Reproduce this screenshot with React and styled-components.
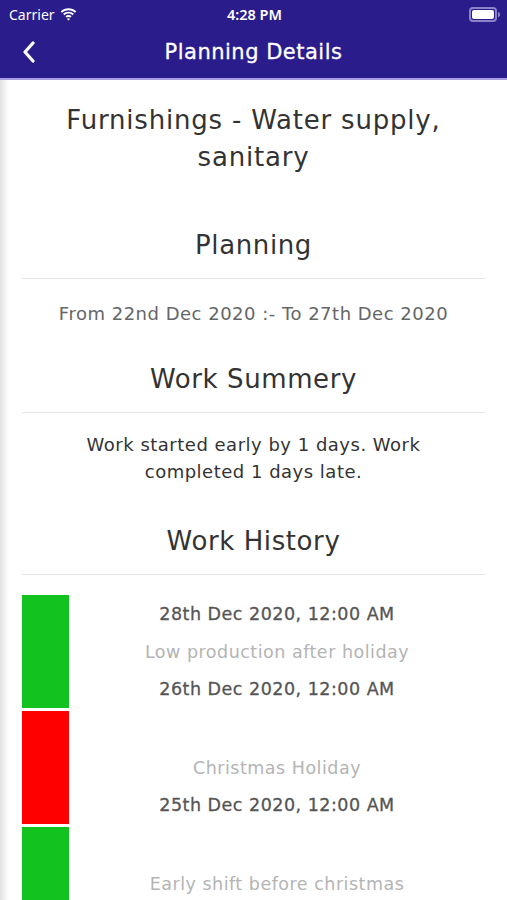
import styled, { createGlobalStyle } from 'styled-components'

const Global = createGlobalStyle`
  body {
    margin: 0;
    background: #ffffff;
    font-family: "DejaVu Sans", "Noto Sans", sans-serif;
  }
`

/* HEADER */
const Header = styled.div`
  background-color: #2b1c8c;
  border-bottom: 2px solid #a89ce0;
  height: 78px;
  color: #ffffff;
  display: flex;
  flex-direction: column;
`

const StatusBar = styled.div`
  height: 28px;
  display: grid;
  grid-template-columns: 1fr auto 1fr;
  align-items: center;
  padding: 0 7px 0 9px;
  font-family: "Noto Sans", sans-serif;
  font-size: 14px;
`

const Carrier = styled.div`
  display: flex;
  align-items: center;
  gap: 5px;
`

const Clock = styled.div`
  font-weight: 600;
  font-size: 14.5px;
`

const Battery = styled.div`
  justify-self: end;
  display: flex;
  align-items: center;
`

const BatteryBody = styled.div`
  width: 22px;
  height: 9px;
  border: 2px solid #8c84c8;
  border-radius: 4px;
  padding: 1px;
  display: flex;
  & > span {
    flex: 1;
    background: #ffffff;
    border-radius: 2px;
  }
`

const BatteryCap = styled.div`
  width: 2px;
  height: 5px;
  margin-left: 1px;
  background: #8c84c8;
  border-radius: 0 2px 2px 0;
`

const NavBar = styled.div`
  flex: 1;
  display: grid;
  grid-template-columns: 60px 1fr 60px;
  align-items: center;
  padding-bottom: 2px;
`

const Back = styled.div`
  padding-left: 22px;
  display: flex;
  align-items: center;
`

const NavTitle = styled.div`
  text-align: center;
  font-size: 21px;
  letter-spacing: 0.5px;
  -webkit-text-stroke: 0.3px #ffffff;
`

/* CORPO */
const Body = styled.div`
  position: relative;
  padding: 0 22px;
  min-height: 820px;
  &::before {
    content: '';
    position: absolute;
    left: 0;
    top: 0;
    bottom: 0;
    width: 9px;
    background: linear-gradient(to right, #e2e2e2, #ffffff);
  }
`

const Title = styled.h1`
  margin: 0;
  padding: 22px 28px 0;
  text-align: center;
  font-size: 26px;
  line-height: 37px;
  letter-spacing: 0.8px;
  font-weight: 400;
  color: #333333;
`

const SectionTitle = styled.h2`
  margin: ${p => p.$top}px 0 0;
  text-align: center;
  font-size: 26px;
  line-height: 36px;
  letter-spacing: 0.6px;
  font-weight: 400;
  color: #333333;
  padding-bottom: 15px;
  border-bottom: 1px solid #e6e6e6;
`

const Text = styled.p`
  margin: 0;
  padding: ${p => p.$top}px ${p => p.$side ?? 40}px 0;
  text-align: center;
  font-size: 18px;
  line-height: 27px;
  letter-spacing: 0.5px;
  color: ${p => p.$color || '#333333'};
`

/* HISTORICO */
const History = styled.div`
  margin-top: 20px;
  display: flex;
  flex-direction: column;
  gap: 3px;
`

const Row = styled.div`
  display: flex;
  height: 113px;
`

const Bar = styled.div`
  width: 47px;
  flex-shrink: 0;
  background-color: ${p => p.$color};
`

const RowContent = styled.div`
  flex: 1;
  display: grid;
  grid-template-rows: 37px 39px 36px;
  align-items: center;
  text-align: center;
  font-size: 17.5px;
  letter-spacing: 0.5px;
`

const DateText = styled.div`
  color: #555555;
  -webkit-text-stroke: 0.3px #555555;
`

const Note = styled.div`
  color: #b4b4b4;
`

const history = [
  { color: '#12c31f', top: '28th Dec 2020, 12:00 AM', note: 'Low production after holiday', date: '26th Dec 2020, 12:00 AM' },
  { color: '#ff0000', note: 'Christmas Holiday', date: '25th Dec 2020, 12:00 AM' },
  { color: '#12c31f', note: 'Early shift before christmas', date: '22nd Dec 2020, 12:00 AM' },
]

function Wifi() {
  return (
    <svg width="17" height="13" viewBox="0 0 17 13">
      <path d="M8.5 2.2c2.5 0 4.8 1 6.5 2.6l1.3-1.4C14.2 1.4 11.5.2 8.5.2S2.8 1.4.7 3.4L2 4.8c1.7-1.6 4-2.6 6.5-2.6z" fill="#fff" />
      <path d="M8.5 5.6c1.6 0 3 .6 4.1 1.6l1.3-1.4C12.5 4.5 10.6 3.7 8.5 3.7S4.5 4.5 3.1 5.8l1.3 1.4c1.1-1 2.5-1.6 4.1-1.6z" fill="#fff" />
      <path d="M8.5 8.9c.7 0 1.3.3 1.8.7l1.3-1.4c-.8-.8-1.9-1.2-3.1-1.2s-2.3.4-3.1 1.2l1.3 1.4c.5-.4 1.1-.7 1.8-.7zM8.5 12.5l1.5-1.6c-.4-.4-.9-.6-1.5-.6s-1.1.2-1.5.6z" fill="#fff" />
    </svg>
  )
}

function App() {
  return (
    <>
      <Global />
      <Header>
        <StatusBar>
          <Carrier>Carrier <Wifi /></Carrier>
          <Clock>4:28 PM</Clock>
          <Battery>
            <BatteryBody><span /></BatteryBody>
            <BatteryCap />
          </Battery>
        </StatusBar>
        <NavBar>
          <Back>
            <svg width="14" height="22" viewBox="0 0 14 22">
              <path d="M11 2 L3 11 L11 20" stroke="#fff" strokeWidth="3.2" fill="none" strokeLinecap="round" strokeLinejoin="round" />
            </svg>
          </Back>
          <NavTitle>Planning Details</NavTitle>
          <div />
        </NavBar>
      </Header>
      <Body>
        <Title>Furnishings - Water supply, sanitary</Title>
        <SectionTitle $top={51}>Planning</SectionTitle>
        <Text $top={21} $side={0} $color="#666666">From 22nd Dec 2020 :- To 27th Dec 2020</Text>
        <SectionTitle $top={34}>Work Summery</SectionTitle>
        <Text $top={18}>Work started early by 1 days. Work completed 1 days late.</Text>
        <SectionTitle $top={38}>Work History</SectionTitle>
        <History>
          {history.map((h, i) => (
            <Row key={i}>
              <Bar $color={h.color} />
              <RowContent>
                <DateText>{h.top}</DateText>
                <Note>{h.note}</Note>
                <DateText>{h.date}</DateText>
              </RowContent>
            </Row>
          ))}
        </History>
      </Body>
    </>
  )
}

export default App
